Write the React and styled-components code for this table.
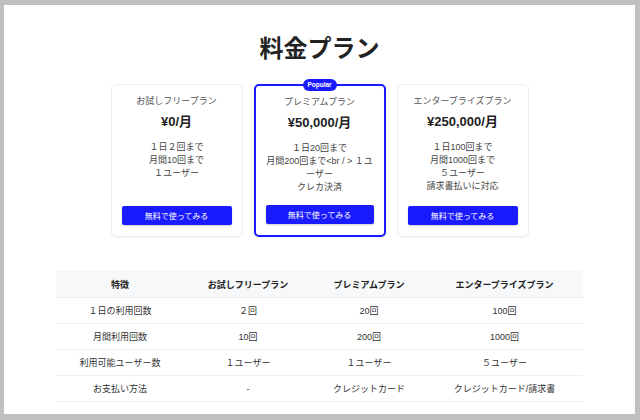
import React from "react";
import styled, { createGlobalStyle } from "styled-components";

const GlobalStyle = createGlobalStyle`
  body {
    margin: 0;
    background: #c0c0c0;
    font-family: "Liberation Sans", "Noto Sans CJK JP", sans-serif;
  }
`;

const Page = styled.div`
  margin: 5px 5px 0 4px;
  height: 409px;
  background: #fff;
  overflow: hidden;
  display: flex;
  flex-direction: column;
  align-items: center;
  padding-top: 29px;
  box-sizing: border-box;
`;

const Title = styled.h1`
  margin: 0;
  font-size: 24px;
  line-height: 29px;
  font-weight: 700;
  color: #222;
`;

const Cards = styled.div`
  display: flex;
  gap: 11px;
  margin-top: 21px;
`;

const Card = styled.div`
  position: relative;
  width: 132px;
  box-sizing: border-box;
  padding: 10px 10px 11px;
  border: ${(p) => (p.$featured ? "2px solid #1a1aff" : "1px solid #eeeeee")};
  border-radius: 5px;
  display: flex;
  flex-direction: column;
  align-items: stretch;
  text-align: center;
  box-shadow: 0 1px 2px rgba(0, 0, 0, 0.04);
`;

const Badge = styled.span`
  position: absolute;
  top: -7px;
  left: 50%;
  transform: translateX(-50%);
  width: 34px;
  height: 12px;
  border-radius: 6px;
  background: #1a1aff;
  color: #fff;
  font-size: 6.5px;
  font-weight: 700;
  line-height: 12px;
`;

const PlanName = styled.div`
  font-size: 9px;
  line-height: 13px;
  color: #555;
`;

const Price = styled.div`
  margin-top: 6px;
  font-size: 13px;
  line-height: 16px;
  font-weight: 700;
  color: #222;
`;

const Features = styled.div`
  margin-top: 11px;
  margin-bottom: 11px;
  font-size: 9px;
  line-height: 13px;
  color: #444;
`;

const Button = styled.button`
  margin-top: auto;
  height: 19px;
  border: none;
  border-radius: 2px;
  background: #1a1aff;
  color: #fff;
  font-family: inherit;
  font-size: 8px;
  box-shadow: 0 1px 2px rgba(0, 0, 0, 0.2);
`;

const Table = styled.table`
  margin-top: 34px;
  width: 527px;
  border-collapse: collapse;
  table-layout: fixed;
  font-size: 9px;
  color: #333;
`;

const Th = styled.th`
  height: 26px;
  padding: 0;
  background: #f7f8fa;
  font-weight: 700;
  color: #222;
  border-bottom: 1px solid #eeeeee;
`;

const Td = styled.td`
  height: 25px;
  padding: 0;
  text-align: center;
  border-bottom: 1px solid #eeeeee;
`;

const plans = [
  { name: "お試しフリープラン", price: "¥0/月", features: ["１日２回まで", "月間10回まで", "１ユーザー"] },
  {
    name: "プレミアムプラン",
    price: "¥50,000/月",
    features: ["１日20回まで", "月間200回まで<br / > １ユーザー", "クレカ決済"],
    popular: true,
  },
  {
    name: "エンタープライズプラン",
    price: "¥250,000/月",
    features: ["１日100回まで", "月間1000回まで", "５ユーザー", "請求書払いに対応"],
  },
];

const rows = [
  ["１日の利用回数", "２回", "20回", "100回"],
  ["月間利用回数", "10回", "200回", "1000回"],
  ["利用可能ユーザー数", "１ユーザー", "１ユーザー", "５ユーザー"],
  ["お支払い方法", "-", "クレジットカード", "クレジットカード/請求書"],
];

export default function App() {
  return (
    <>
      <GlobalStyle />
      <Page>
        <Title>料金プラン</Title>
        <Cards>
          {plans.map((p) => (
            <Card key={p.name} $featured={p.popular}>
              {p.popular && <Badge>Popular</Badge>}
              <PlanName>{p.name}</PlanName>
              <Price>{p.price}</Price>
              <Features>
                {p.features.map((f) => (
                  <div key={f}>{f}</div>
                ))}
              </Features>
              <Button>無料で使ってみる</Button>
            </Card>
          ))}
        </Cards>
        <Table>
          <colgroup>
            <col style={{ width: "128px" }} />
            <col style={{ width: "128px" }} />
            <col style={{ width: "114px" }} />
            <col />
          </colgroup>
          <thead>
            <tr>
              <Th>特徴</Th>
              <Th>お試しフリープラン</Th>
              <Th>プレミアムプラン</Th>
              <Th>エンタープライズプラン</Th>
            </tr>
          </thead>
          <tbody>
            {rows.map((r) => (
              <tr key={r[0]}>
                {r.map((c, i) => (
                  <Td key={i}>{c}</Td>
                ))}
              </tr>
            ))}
          </tbody>
        </Table>
      </Page>
    </>
  );
}
